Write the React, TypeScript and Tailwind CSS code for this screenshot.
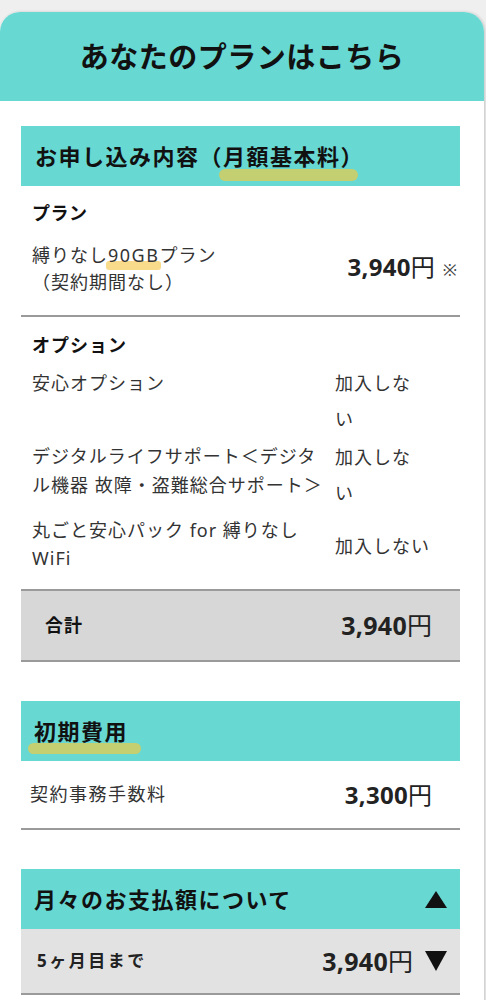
const teal = "bg-[#68d8d3]";

function SectionHeader({ children }: { children: React.ReactNode }) {
  return (
    <div className={`flex h-[60px] items-center justify-between ${teal} pl-[13px] pr-[13px]`}>
      {children}
    </div>
  );
}

function Price({ value, size }: { value: string; size: string }) {
  return (
    <span className={`${size} leading-none text-[#222]`}>
      <span className="font-bold tracking-[0.3px]">{value}</span>
      <span className="font-normal">円</span>
    </span>
  );
}

export default function App() {
  return (
    <div className="min-h-screen bg-[#efefef] pt-[12px] font-['Noto_Sans','Noto_Sans_CJK_JP',sans-serif] text-[#333]">
      <div className="w-[484px] overflow-hidden rounded-t-[20px] bg-white pb-[40px] shadow-[1px_0_3px_rgba(0,0,0,0.18)]">
        <div className={`flex h-[89px] items-center justify-center ${teal}`}>
          <h1 className="text-[29px] font-bold tracking-[0.5px] text-[#111]">
            あなたのプランはこちら
          </h1>
        </div>

        <div className="ml-[21px] mr-[24px] pt-[25px]">
          {/* 月額基本料 */}
          <SectionHeader>
            <h2 className="pl-[1px] text-[22px] font-bold leading-none tracking-[1.5px] text-[#111]">
              お申し込み内容（
              <span className="relative inline-block">
                <span className="absolute -bottom-[14px] -left-[4px] right-[6px] h-[12px] rounded-full bg-[#c3cf70]" />
                <span className="relative">月額基本料）</span>
              </span>
            </h2>
          </SectionHeader>

          <div className="border-b-2 border-[#9a9a9a] px-[11px] pb-[19px] pt-[14px]">
            <p className="text-[18px] font-bold leading-[26px] tracking-[0.5px] text-[#111]">プラン</p>
            <div className="mt-[16px] flex items-center justify-between">
              <p className="text-[18px] leading-[27px] tracking-[1px]">
                縛りなし
                <span className="relative inline-block tracking-[1.5px]">
                  <span className="absolute -bottom-[1px] -left-[2px] -right-[2px] h-[9px] rounded-[3px] bg-[#f8dc8c]" />
                  <span className="relative">90GB</span>
                </span>
                プラン
                <br />
                （契約期間なし）
              </p>
              <p className="-mr-[8px] flex items-baseline gap-[8px]">
                <Price value="3,940" size="text-[24px]" />
                <span className="text-[17px] text-[#444]">※</span>
              </p>
            </div>
          </div>

          <div className="px-[11px] pb-[17px] pt-[15px]">
            <p className="text-[18px] font-bold leading-[26px] tracking-[1px] text-[#111]">オプション</p>

            <div className="mt-[7px] flex text-[18px] tracking-[1px]">
              <p className="flex-1 pt-[4px] leading-[28px]">安心オプション</p>
              <p className="w-[114px] shrink-0 leading-[36px]">
                加入しな
                <br />い
              </p>
            </div>

            <div className="mt-[2px] flex text-[18px] tracking-[1px]">
              <p className="flex-1 pt-[3px] leading-[29px]">
                デジタルライフサポート＜デジタ
                <br />
                ル機器 故障・盗難総合サポート＞
              </p>
              <p className="w-[114px] shrink-0 leading-[36px]">
                加入しな
                <br />い
              </p>
            </div>

            <div className="mt-[5px] flex items-center text-[18px] tracking-[1px]">
              <p className="flex-1 leading-[28px]">
                丸ごと安心パック for 縛りなし
                <br />
                WiFi
              </p>
              <p className="w-[114px] shrink-0 pt-[4px] leading-[36px]">加入しない</p>
            </div>
          </div>

          <div className="flex h-[73px] items-center justify-between border-y-2 border-[#9a9a9a] bg-[#d7d7d7] pl-[24px] pr-[28px]">
            <p className="text-[18px] font-bold tracking-[1px] text-[#111]">合計</p>
            <Price value="3,940" size="text-[25px]" />
          </div>

          {/* 初期費用 */}
          <div className="mt-[39px]">
            <SectionHeader>
              <h2 className="relative text-[22px] font-bold leading-none tracking-[1.5px] text-[#111]">
                <span className="absolute -bottom-[12px] -left-[6px] -right-[13px] h-[11px] rounded-full bg-[#c3cf70]" />
                <span className="relative">初期費用</span>
              </h2>
            </SectionHeader>
            <div className="flex h-[69px] items-center justify-between border-b-2 border-[#9a9a9a] pl-[9px] pr-[28px]">
              <p className="text-[18px] tracking-[1.5px]">契約事務手数料</p>
              <Price value="3,300" size="text-[24px]" />
            </div>
          </div>

          {/* 月々のお支払額 */}
          <div className="mt-[39px]">
            <SectionHeader>
              <h2 className="text-[22px] font-bold leading-none tracking-[1.5px] text-[#111]">
                月々のお支払額について
              </h2>
              <svg viewBox="0 0 22 17" className="h-[17px] w-[22px]" aria-hidden="true">
                <path d="M11 0L22 17H0z" fill="#111" />
              </svg>
            </SectionHeader>
            <div className="flex h-[66px] items-center justify-between border-b-2 border-[#9a9a9a] bg-[#e2e2e2] pl-[16px] pr-[13px]">
              <p className="text-[17px] font-bold tracking-[2.5px] text-[#222]">5ヶ月目まで</p>
              <div className="flex items-center gap-[12px]">
                <Price value="3,940" size="text-[25px]" />
                <svg viewBox="0 0 22 20" className="h-[20px] w-[22px]" aria-hidden="true">
                  <path d="M0 0H22L11 20z" fill="#111" />
                </svg>
              </div>
            </div>
          </div>
        </div>
      </div>
    </div>
  );
}
